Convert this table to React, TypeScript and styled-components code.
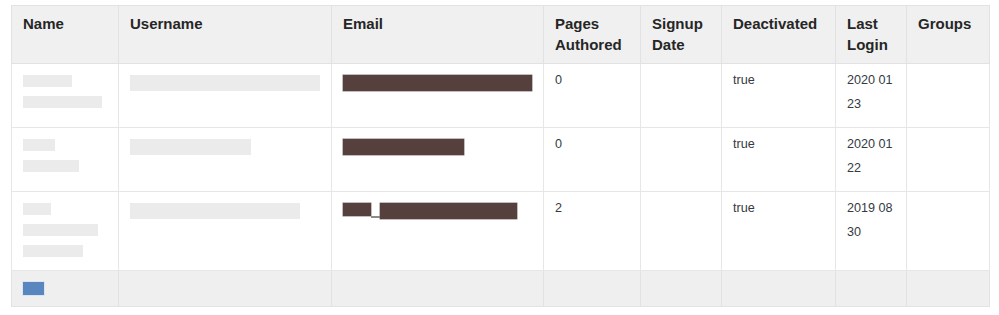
import React from "react";
import styled, { createGlobalStyle } from "styled-components";

interface UserRow {
  id: number;
  name: number[];
  username: number;
  email: { width: number; height: number; gapBefore?: boolean }[];
  pages: string;
  deactivated: string;
  lastLogin: string;
}

const COLUMNS = [
  { key: "name", label: "Name", width: 107 },
  { key: "username", label: "Username", width: 213 },
  { key: "email", label: "Email", width: 212 },
  { key: "pages", label: "Pages Authored", width: 97 },
  { key: "signup", label: "Signup Date", width: 81 },
  { key: "deactivated", label: "Deactivated", width: 114 },
  { key: "login", label: "Last Login", width: 71 },
  { key: "groups", label: "Groups", width: 83 },
];

const USERS: UserRow[] = [
  {
    id: 1,
    name: [49, 79],
    username: 190,
    email: [{ width: 189, height: 16 }],
    pages: "0",
    deactivated: "true",
    lastLogin: "2020 01 23",
  },
  {
    id: 2,
    name: [32, 56],
    username: 121,
    email: [{ width: 121, height: 16 }],
    pages: "0",
    deactivated: "true",
    lastLogin: "2020 01 22",
  },
  {
    id: 3,
    name: [28, 75, 60],
    username: 170,
    email: [
      { width: 28, height: 13 },
      { width: 137, height: 16, gapBefore: true },
    ],
    pages: "2",
    deactivated: "true",
    lastLogin: "2019 08 30",
  },
];

const App: React.FC = () => {
  return (
    <>
      <GlobalStyle />
      <Page>
        <Table>
          <colgroup>
            {COLUMNS.map((col) => (
              <col key={col.key} style={{ width: col.width }} />
            ))}
          </colgroup>
          <thead>
            <tr>
              {COLUMNS.map((col) => (
                <HeadCell key={col.key}>{col.label}</HeadCell>
              ))}
            </tr>
          </thead>
          <tbody>
            {USERS.map((user) => (
              <tr key={user.id}>
                <Cell>
                  {user.name.map((w, i) => (
                    <NameLine key={i}>
                      <Blur $width={w} $height={12} />
                    </NameLine>
                  ))}
                </Cell>
                <Cell>
                  <BarLine>
                    <Blur $width={user.username} $height={16} />
                  </BarLine>
                </Cell>
                <Cell>
                  <BarLine>
                    {user.email.map((part, i) => (
                      <React.Fragment key={i}>
                        {part.gapBefore && <Underscore />}
                        <Redacted $width={part.width} $height={part.height} />
                      </React.Fragment>
                    ))}
                  </BarLine>
                </Cell>
                <Cell>{user.pages}</Cell>
                <Cell />
                <Cell>{user.deactivated}</Cell>
                <Cell $tight>{user.lastLogin}</Cell>
                <Cell />
              </tr>
            ))}
          </tbody>
          <tfoot>
            <tr>
              <FootCell>
                <PageChip />
              </FootCell>
              {COLUMNS.slice(1).map((col) => (
                <FootCell key={col.key} />
              ))}
            </tr>
          </tfoot>
        </Table>
      </Page>
    </>
  );
};

const GlobalStyle = createGlobalStyle`
  body {
    margin: 0;
    background: #ffffff;
    font-family: "Liberation Sans", Arial, sans-serif;
    color: #333333;
  }
`;

const Page = styled.div`
  padding: 5px 0 0 11px;
`;

const Table = styled.table`
  border-collapse: collapse;
  table-layout: fixed;
  width: 978px;
  border: 1px solid #e2e2e2;
`;

const HeadCell = styled.th`
  background: #f0f0f0;
  border: 1px solid #e2e2e2;
  padding: 7px 11px 8px;
  font-size: 15px;
  line-height: 21px;
  font-weight: bold;
  text-align: left;
  vertical-align: top;
  color: #262626;
`;

const Cell = styled.td<{ $tight?: boolean }>`
  border: 1px solid #e6e6e6;
  padding: 4px ${(p) => (p.$tight ? "5px" : "11px")} 11px 11px;
  font-size: 12.6px;
  line-height: 24px;
  vertical-align: top;
  color: #353a42;
`;

const FootCell = styled.td`
  background: #efefef;
  border: 1px solid #e2e2e2;
  padding: 0 11px;
  height: 35px;
  vertical-align: middle;
`;

const NameLine = styled.div`
  height: 21px;
  padding-top: 7px;
  box-sizing: border-box;
`;

const BarLine = styled.div`
  display: flex;
  align-items: flex-start;
  padding-top: 7px;
`;

const Blur = styled.div<{ $width: number; $height: number }>`
  width: ${(p) => p.$width}px;
  height: ${(p) => p.$height}px;
  background: #ebebeb;
`;

const Redacted = styled.div<{ $width: number; $height: number }>`
  width: ${(p) => p.$width}px;
  height: ${(p) => p.$height}px;
  background: #56403e;
  box-shadow: 0 0 0 0.5px #8a7a79;
`;

const Underscore = styled.div`
  width: 9px;
  height: 2px;
  margin-top: 13px;
  background: #8c8c8c;
`;

const PageChip = styled.div`
  width: 21px;
  height: 13px;
  background: #5a86bf;
  box-shadow: 0 0 0 1px #dbe5f1;
`;

export default App;
